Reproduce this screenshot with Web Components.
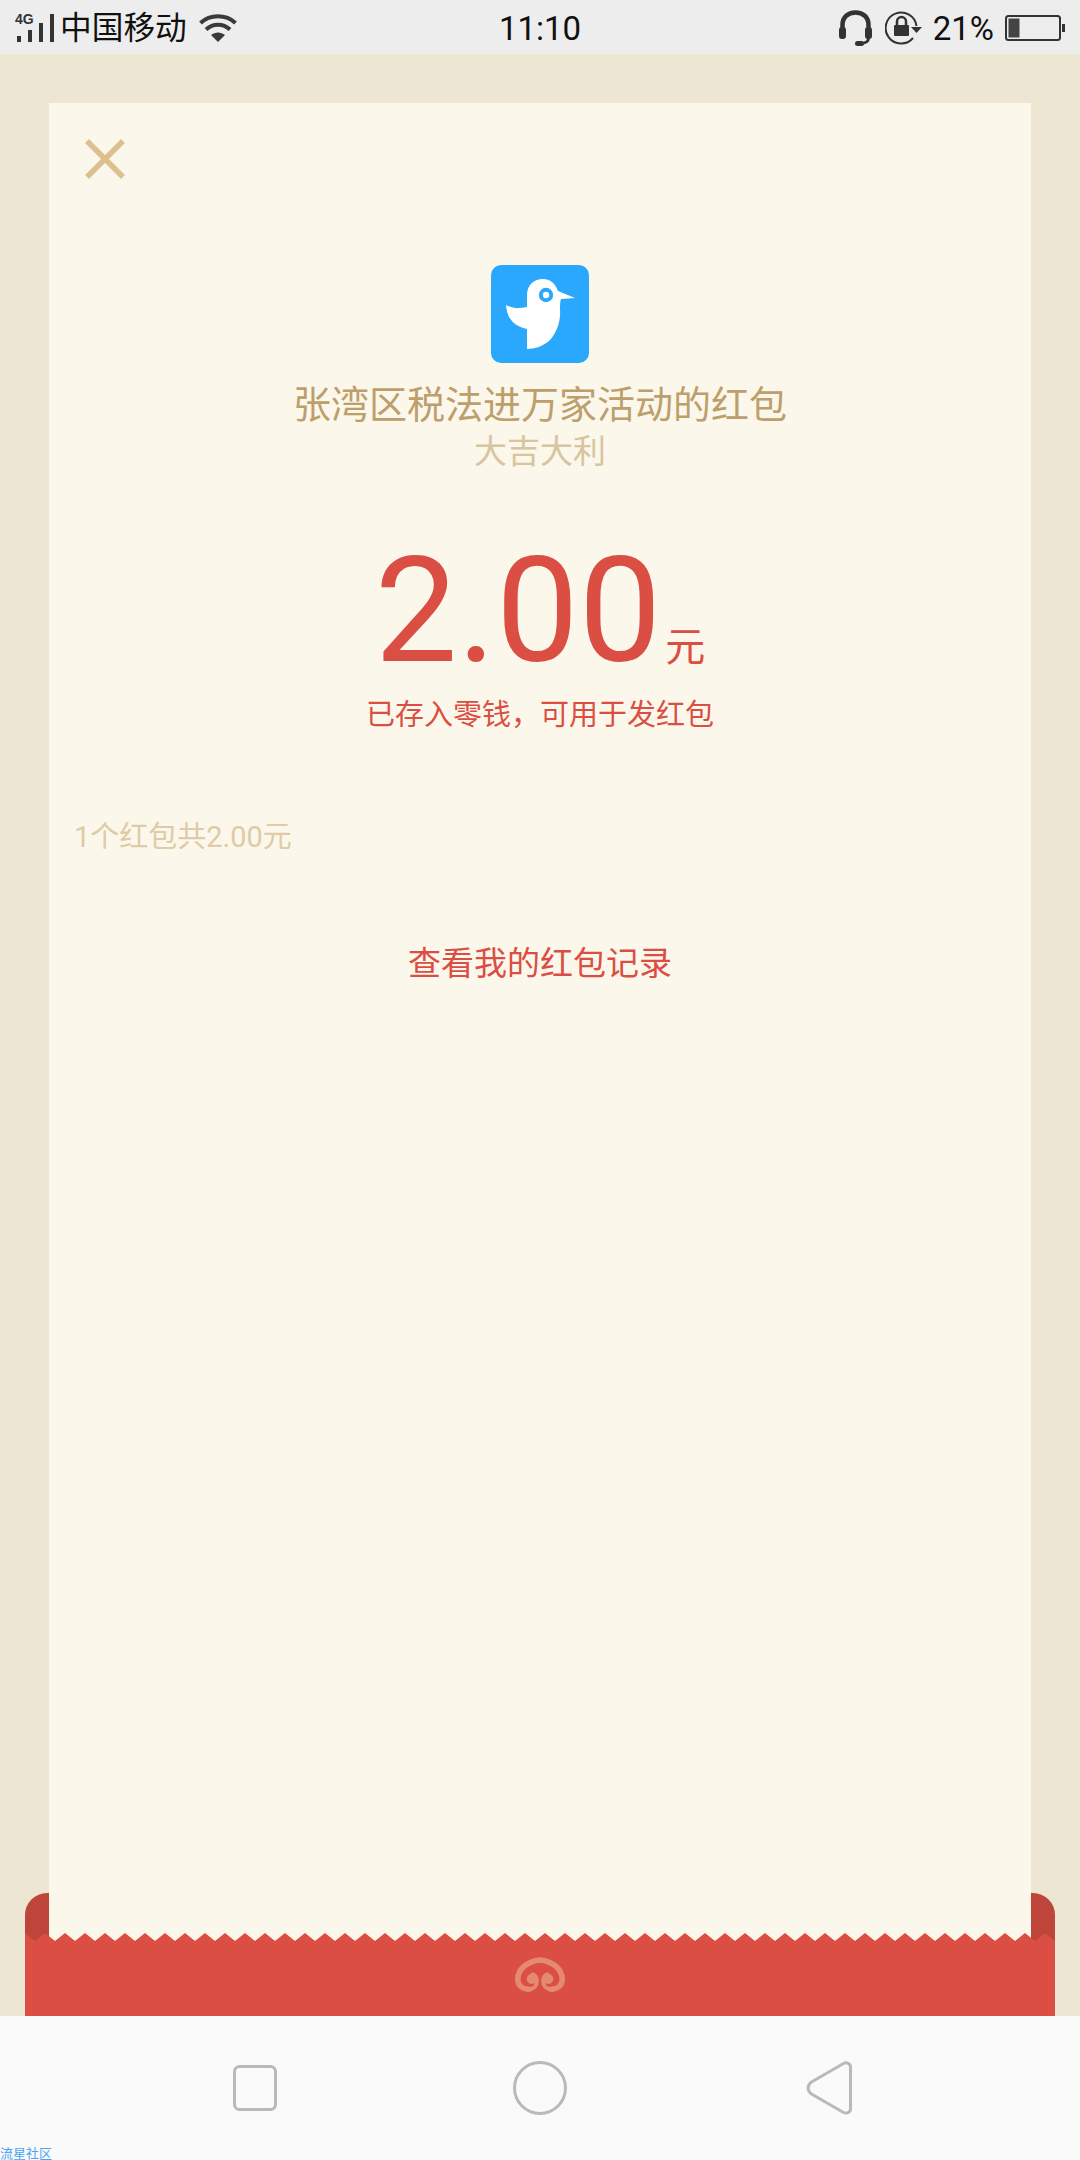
<!DOCTYPE html>
<html lang="zh">
<head>
<meta charset="utf-8">
<title>红包详情</title>
<style>
  html, body { margin: 0; padding: 0; background: #ede6d3; }
  body { font-family: Roboto, "Noto Sans CJK SC", sans-serif; }
</style>
</head>
<body>
<packet-page>
  <status-bar carrier="中国移动" time="11:10" battery="21%"></status-bar>
  <packet-stage>
    <packet-card title-text="张湾区税法进万家活动的红包" wish="大吉大利" amount="2.00" unit="元" note="已存入零钱，可用于发红包" summary="1个红包共2.00元" link="查看我的红包记录"></packet-card>
  </packet-stage>
  <nav-bar mark="流星社区"></nav-bar>
</packet-page>

<script>
'use strict';

(function() {
  const FONT = 'Roboto, "Noto Sans CJK SC", sans-serif';

  class PacketPage extends HTMLElement {
    constructor() {
      super();
      const shadow = this.attachShadow({ mode: 'open' });
      shadow.innerHTML = `
        <style>
          :host { display: flex; flex-direction: column; width: 1080px; height: 2160px; overflow: hidden; font-family: ${FONT}; }
        </style>
        <slot></slot>`;
    }
  }

  class StatusBar extends HTMLElement {
    constructor() {
      super();
      const shadow = this.attachShadow({ mode: 'open' });
      shadow.innerHTML = `
        <style>
          :host { display: grid; grid-template-columns: 1fr auto 1fr; align-items: center; height: 54px; background: #ededed; color: #111; flex: none; }
          .left, .right { display: flex; align-items: center; }
          .left { padding-left: 15px; }
          .right { justify-content: flex-end; padding-right: 15px; }
          .net { margin-right: 5px; }
          .net text { font: 700 14px "Liberation Sans", sans-serif; fill: #333; }
          .carrier { font-size: 31.7px; line-height: 52px; padding-top: 2px; margin-right: 12px; }
          .time { font-size: 33px; line-height: 52px; padding-top: 3px; }
          .pct { font-size: 33px; line-height: 52px; padding-top: 2px; margin: 0 11px 0 11px; }
          svg { display: block; }
          .head { margin-right: 13px; }
        </style>
        <div class="left">
          <svg class="net" width="40" height="34" viewBox="0 -3 40 34">
            <text x="0" y="10">4G</text>
            <rect x="2" y="22" width="4" height="6" fill="#333"/>
            <rect x="13" y="16" width="4" height="12" fill="#333"/>
            <rect x="24" y="9" width="4" height="19" fill="#333"/>
            <rect x="35" y="0" width="4" height="28" fill="#333"/>
          </svg>
          <span class="carrier">${this.getAttribute('carrier')}</span>
          <svg width="38" height="28" viewBox="0 0 38 28" fill="none" stroke="#3a3a3a" stroke-width="4">
            <path d="M1.5 9C11 0 27 0 36.5 9"/>
            <path d="M7 15.5C14 9 24 9 31 15.5"/>
            <path d="M19 28l-7-7c4-3.5 10-3.5 14 0z" fill="#3a3a3a" stroke="none"/>
          </svg>
        </div>
        <div class="time">${this.getAttribute('time')}</div>
        <div class="right">
          <svg class="head" width="33" height="36" viewBox="0 0 33 36" fill="none">
            <path d="M3.5 20V15C3.5 7 9 2.5 16.5 2.5S29.5 7 29.5 15V20" stroke="#333" stroke-width="4.5"/>
            <rect x="0" y="17" width="7" height="12" rx="3" fill="#333"/>
            <rect x="26" y="17" width="7" height="12" rx="3" fill="#333"/>
            <path d="M29.5 28C29.5 32 27 33.5 20 33.5" stroke="#333" stroke-width="3"/>
            <rect x="16" y="31" width="9" height="5" rx="2.5" fill="#333"/>
          </svg>
          <svg width="37" height="34" viewBox="0 0 37 34" fill="none">
            <path d="M31.5 15A15.5 15.5 0 1 0 28 27" stroke="#333" stroke-width="2"/>
            <path d="M26 16H37L31.5 22z" fill="#333"/>
            <rect x="9" y="14" width="15" height="11" rx="1" fill="#333"/>
            <path d="M12 14V10.5a4.5 4.5 0 0 1 9 0V14" stroke="#333" stroke-width="2.5"/>
          </svg>
          <span class="pct">${this.getAttribute('battery')}</span>
          <svg width="60" height="26" viewBox="0 0 60 26" fill="none">
            <rect x="1" y="1" width="54" height="24" rx="2.5" stroke="#333" stroke-width="2"/>
            <rect x="3.5" y="3.5" width="11" height="19" fill="#444"/>
            <rect x="57" y="9" width="3" height="8" fill="#333"/>
          </svg>
        </div>`;
    }
  }

  class PacketStage extends HTMLElement {
    constructor() {
      super();
      const shadow = this.attachShadow({ mode: 'open' });

      // zigzag top edge of the front flap: peaks every 20px starting at the left edge
      let edge = 'M0 8';
      for (let x = 0; x < 1030; x += 20) edge += `L${x} 0L${x + 10} 8`;
      edge += 'V83H0Z';

      shadow.innerHTML = `
        <style>
          :host { display: grid; flex: 1; min-height: 0; }
          .back, .sheet, .front { grid-area: 1 / 1; }
          .back { align-self: end; margin: 0 25px; height: 123px; background: #be4539; border-radius: 22px 22px 0 0; }
          .sheet { margin: 49px 49px 0; height: 1842px; background: #fbf7eb; }
          .front { align-self: end; margin: 0 25px; height: 83px; position: relative; display: flex; justify-content: center; }
          .front > svg.flap { display: block; }
          .mark { position: absolute; left: 490px; top: 24px; }
        </style>
        <div class="back"></div>
        <div class="sheet"><slot></slot></div>
        <div class="front">
          <svg class="flap" width="1030" height="83" viewBox="0 0 1030 83"><path d="${edge}" fill="#db4e43"/></svg>
          <svg class="mark" width="50" height="35" viewBox="0 0 50 35" fill="none" stroke="#e58a70" stroke-linecap="round">
            <path stroke-width="5.5" d="M25 3C14 4 2.8 11 2.8 22C2.8 29 8 32.2 14 32.2M25 3C36 4 47.2 11 47.2 22C47.2 29 42 32.2 36 32.2"/>
            <path stroke-width="4" d="M14 32.2C19 32.2 21.8 28.5 21.8 24C21.8 20.5 20 18 17.5 17.5M36 32.2C31 32.2 28.2 28.5 28.2 24C28.2 20.5 30 18 32.5 17.5"/>
            <circle cx="16.7" cy="22" r="5" fill="#e58a70" stroke="none"/>
            <circle cx="33.3" cy="22" r="5" fill="#e58a70" stroke="none"/>
          </svg>
        </div>`;
    }
  }

  class PacketCard extends HTMLElement {
    constructor() {
      super();
      const shadow = this.attachShadow({ mode: 'open' });
      shadow.innerHTML = `
        <style>
          :host { display: flex; flex-direction: column; align-items: center; padding-top: 36px; }
          .close { align-self: flex-start; margin-left: 36px; display: block; }
          .logo { display: block; margin-top: 86px; }
          .title { margin-top: 16px; font-size: 38px; line-height: 52px; color: #bd9f6b; }
          .wish { font-size: 33px; line-height: 42px; color: #d8c49e; }
          .money { display: flex; align-items: baseline; margin-top: 93px; color: #db4e43; line-height: 90px; }
          .amount { font-size: 147px; }
          .unit { font-size: 40px; margin-left: 4px; }
          .note { font-size: 29px; line-height: 40px; margin-top: 2px; color: #db4e43; }
          .summary { align-self: flex-start; margin: 82px 0 0 25px; font-size: 29px; line-height: 40px; color: #dfcba6; }
          .link { margin-top: 84px; font-size: 33px; line-height: 46px; color: #db4e43; }
        </style>
        <svg class="close" width="40" height="40" viewBox="0 0 40 40" stroke="#dcc08f" stroke-width="5.5">
          <path d="M2 2L38 38M38 2L2 38"/>
        </svg>
        <svg class="logo" width="98" height="98" viewBox="0 0 98 98">
          <rect width="98" height="98" rx="10" fill="#29a8fd"/>
          <path d="M15 40C20 43 28 44 36 42V30C36 20 43 14 52 14C59 14 64 18 67 26L84 33L70 34C69 37 69 40 69 44C70 55 66 68 58 76C52 81 44 84 36 84V64C26 62 16 56 15 40Z" fill="#fff"/>
          <circle cx="55" cy="30" r="7.2" fill="#29a8fd"/>
          <circle cx="55" cy="30" r="3.2" fill="#fff"/>
        </svg>
        <div class="title">${this.getAttribute('title-text')}</div>
        <div class="wish">${this.getAttribute('wish')}</div>
        <div class="money"><span class="amount">${this.getAttribute('amount')}</span><span class="unit">${this.getAttribute('unit')}</span></div>
        <div class="note">${this.getAttribute('note')}</div>
        <div class="summary">${this.getAttribute('summary')}</div>
        <div class="link">${this.getAttribute('link')}</div>`;
    }
  }

  class NavBar extends HTMLElement {
    constructor() {
      super();
      const shadow = this.attachShadow({ mode: 'open' });
      shadow.innerHTML = `
        <style>
          :host { display: flex; align-items: center; height: 144px; flex: none; background: #fafafa; position: relative; padding-left: 225px; }
          svg { display: block; fill: none; stroke: #b9b9b9; stroke-width: 3; }
          .home { margin-left: 225px; }
          .back { margin-left: 230px; }
          .mark { position: absolute; left: 0; bottom: 0; font-size: 13px; line-height: 13px; color: #4aa5f5; }
        </style>
        <svg width="60" height="60" viewBox="0 0 60 60"><rect x="9.5" y="8.5" width="41" height="43" rx="5"/></svg>
        <svg class="home" width="60" height="60" viewBox="0 0 60 60"><circle cx="30" cy="30" r="25.5"/></svg>
        <svg class="back" width="60" height="60" viewBox="0 0 60 60"><path d="M11.5 24L43.5 5.5C46.5 3.8 50.5 5.5 50.5 9V51C50.5 54.5 46.5 56 43.5 54.5L11.5 36C7 33 7 27 11.5 24Z"/></svg>
        <span class="mark">${this.getAttribute('mark')}</span>`;
    }
  }

  customElements.define('packet-page', PacketPage);
  customElements.define('status-bar', StatusBar);
  customElements.define('packet-stage', PacketStage);
  customElements.define('packet-card', PacketCard);
  customElements.define('nav-bar', NavBar);
})();
</script>
</body>
</html>
